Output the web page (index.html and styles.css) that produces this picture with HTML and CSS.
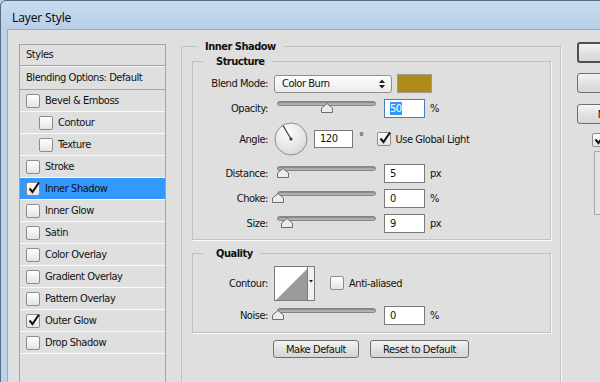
FILE: index.html
```html
<!DOCTYPE html>
<html lang="en">
<head>
    <meta charset="UTF-8">
    <title>Layer Style</title>
    <link rel="stylesheet" href="styles.css">
</head>
<body>

<div class="window">
    <div class="titlebar">Layer Style</div>

    <div class="client">
        <!-- 左侧样式列表 -->
        <div class="sidebar">
            <div class="side-head">Styles</div>
            <div class="side-blend">Blending Options: Default</div>
            <div class="side-item"><span class="cb"></span>Bevel &amp; Emboss</div>
            <div class="side-item sub"><span class="cb"></span>Contour</div>
            <div class="side-item sub"><span class="cb"></span>Texture</div>
            <div class="side-item"><span class="cb"></span>Stroke</div>
            <div class="side-item active"><span class="cb checked"><svg viewBox="0 0 12 12"><path d="M1.5 6.5 L4.5 10 L11 0.5"/></svg></span>Inner Shadow</div>
            <div class="side-item"><span class="cb"></span>Inner Glow</div>
            <div class="side-item"><span class="cb"></span>Satin</div>
            <div class="side-item"><span class="cb"></span>Color Overlay</div>
            <div class="side-item"><span class="cb"></span>Gradient Overlay</div>
            <div class="side-item"><span class="cb"></span>Pattern Overlay</div>
            <div class="side-item"><span class="cb checked"><svg viewBox="0 0 12 12"><path d="M1.5 6.5 L4.5 10 L11 0.5"/></svg></span>Outer Glow</div>
            <div class="side-item"><span class="cb"></span>Drop Shadow</div>
        </div>

        <!-- 中间设置区 -->
        <div class="main">
            <fieldset class="outer">
                <legend>Inner Shadow</legend>

                <fieldset class="group">
                    <legend>Structure</legend>

                    <div class="row">
                        <span class="lbl">Blend Mode:</span>
                        <div class="select">Color Burn
                            <svg class="updown" viewBox="0 0 6 10"><path d="M0 4 L3 0.5 L6 4 Z M0 6 L3 9.5 L6 6 Z"/></svg>
                        </div>
                        <div class="swatch"></div>
                    </div>

                    <div class="row">
                        <span class="lbl">Opacity:</span>
                        <div class="slider"><div class="track"></div>
                            <svg class="thumb" style="left:44px" viewBox="0 0 12 10"><polygon points="0.5,9.5 0.5,5 6,0.5 11.5,5 11.5,9.5"/></svg>
                        </div>
                        <div class="num focus"><span class="sel">50</span></div>
                        <span class="unit">%</span>
                    </div>

                    <div class="row angle">
                        <span class="lbl">Angle:</span>
                        <svg class="dial" viewBox="0 0 34 34">
                            <defs>
                                <radialGradient id="dialFill" cx="0.4" cy="0.3" r="0.8">
                                    <stop offset="0" stop-color="#ffffff"/>
                                    <stop offset="1" stop-color="#d4d4d4"/>
                                </radialGradient>
                            </defs>
                            <circle cx="17" cy="17" r="16" fill="url(#dialFill)" stroke="#8c8c8c"/>
                            <line x1="17" y1="17" x2="9" y2="3.5" stroke="#3a3a3a" stroke-width="1.2"/>
                            <circle cx="17" cy="17" r="1.6" fill="#3a3a3a"/>
                        </svg>
                        <div class="num small">120</div>
                        <span class="deg">°</span>
                        <span class="cb checked gl"><svg viewBox="0 0 12 12"><path d="M1.5 6.5 L4.5 10 L11 0.5"/></svg></span>
                        <span class="cb-text">Use Global Light</span>
                    </div>

                    <div class="row">
                        <span class="lbl">Distance:</span>
                        <div class="slider"><div class="track"></div>
                            <svg class="thumb" style="left:0px" viewBox="0 0 12 10"><polygon points="0.5,9.5 0.5,5 6,0.5 11.5,5 11.5,9.5"/></svg>
                        </div>
                        <div class="num">5</div>
                        <span class="unit">px</span>
                    </div>

                    <div class="row">
                        <span class="lbl">Choke:</span>
                        <div class="slider"><div class="track"></div>
                            <svg class="thumb" style="left:-5px" viewBox="0 0 12 10"><polygon points="0.5,9.5 0.5,5 6,0.5 11.5,5 11.5,9.5"/></svg>
                        </div>
                        <div class="num">0</div>
                        <span class="unit">%</span>
                    </div>

                    <div class="row">
                        <span class="lbl">Size:</span>
                        <div class="slider"><div class="track"></div>
                            <svg class="thumb" style="left:4px" viewBox="0 0 12 10"><polygon points="0.5,9.5 0.5,5 6,0.5 11.5,5 11.5,9.5"/></svg>
                        </div>
                        <div class="num">9</div>
                        <span class="unit">px</span>
                    </div>
                </fieldset>

                <fieldset class="group quality">
                    <legend>Quality</legend>

                    <div class="row contour-row">
                        <span class="lbl">Contour:</span>
                        <svg class="contour" viewBox="0 0 41 35">
                            <rect x="0.5" y="0.5" width="33" height="34" fill="#ffffff" stroke="#7c7c7c"/>
                            <polygon points="2,34 33,3 33,34" fill="#9b9b9b"/>
                            <rect x="33.5" y="0.5" width="7" height="34" fill="#f1f1f1" stroke="#7c7c7c"/>
                            <polygon points="35,14 39,14 37,16.5" fill="#1a1a1a"/>
                        </svg>
                        <span class="cb aa"></span>
                        <span class="cb-text">Anti-aliased</span>
                    </div>

                    <div class="row">
                        <span class="lbl">Noise:</span>
                        <div class="slider"><div class="track"></div>
                            <svg class="thumb" style="left:-5px" viewBox="0 0 12 10"><polygon points="0.5,9.5 0.5,5 6,0.5 11.5,5 11.5,9.5"/></svg>
                        </div>
                        <div class="num">0</div>
                        <span class="unit">%</span>
                    </div>
                </fieldset>

                <div class="defaults">
                    <button type="button" class="btn make">Make Default</button>
                    <button type="button" class="btn reset">Reset to Default</button>
                </div>
            </fieldset>
        </div>

        <!-- 右侧按钮 -->
        <div class="actions">
            <button type="button" class="btn side default">OK</button>
            <button type="button" class="btn side">Cancel</button>
            <button type="button" class="btn side">New Style...</button>
            <div class="preview-row">
                <span class="cb checked"><svg viewBox="0 0 12 12"><path d="M1.5 6.5 L4.5 10 L11 0.5"/></svg></span>
                <span class="cb-text">Preview</span>
            </div>
            <div class="preview"></div>
        </div>
    </div>
</div>

</body>
</html>
```

FILE: styles.css
```css
html, body {
    margin: 0;
    height: 100%;
    overflow: hidden;
}
body {
    background: #bcd2ea;
    font-family: "DejaVu Sans Condensed", "DejaVu Sans", sans-serif;
    font-stretch: condensed;
    font-size: 11px;
    letter-spacing: -0.45px;
    color: #111;
}
.window {
    width: 720px;
    height: 420px;
    border: 1px solid #5a6b7e;
    border-radius: 6px 6px 0 0;
    background: linear-gradient(#c8dcf1, #b8cfe8 29px, #bcd2ea 29px);
}
.titlebar {
    height: 24px;
    padding: 4px 0 0 11px;
    display: flex;
    align-items: center;
    font-family: "Open Sans", "Noto Sans", sans-serif;
    font-stretch: normal;
    font-size: 12px;
    letter-spacing: -0.1px;
    color: #000;
}
.client {
    margin-left: 6px;
    height: 400px;
    border-top: 1px solid #97abc2;
    border-left: 1px solid #97abc2;
    background: #dfdfdf;
    display: flex;
    align-items: flex-start;
}

/* sidebar */
.sidebar {
    margin: 14px 0 0 11px;
    width: 145px;
    height: 360px;
    border: 1px solid #a4a4a4;
}
.side-head {
    height: 20px;
    line-height: 20px;
    padding-left: 6px;
    border-bottom: 1px solid #a4a4a4;
}
.side-blend {
    height: 22px;
    line-height: 22px;
    padding-left: 6px;
    border-top: 1px solid #f4f4f4;
    border-bottom: 1px solid #a4a4a4;
}
.side-item {
    height: 21px;
    display: flex;
    align-items: center;
    padding-left: 6px;
    border-bottom: 1px solid #fbfbfb;
}
.side-item.sub {
    padding-left: 19px;
}
.side-item.active {
    background: #3399ff;
}
.side-item .cb {
    margin-right: 5px;
}
.cb {
    flex: none;
    display: inline-block;
    width: 12px;
    height: 12px;
    border: 1px solid #8b8c8c;
    border-radius: 2px;
    background: linear-gradient(#ffffff, #e4e4e4);
    position: relative;
}
.cb svg {
    position: absolute;
    left: 1px;
    top: -1px;
    width: 12px;
    height: 12px;
}
.cb svg path {
    fill: none;
    stroke: #111;
    stroke-width: 2;
}

/* main area */
.main {
    margin: 10px 0 0 15px;
}
fieldset {
    margin: 0;
    padding: 0;
    border: 1px solid #c1c1c1;
    box-shadow: 1px 1px 0 #fafafa;
}
legend {
    font-weight: bold;
    line-height: 13px;
    letter-spacing: -0.5px;
}
.outer {
    width: 378px;
    height: 360px;
}
.outer > legend {
    margin-left: 15px;
    padding: 0 8px;
}
.group {
    margin: 2px 9px 0 10px;
    padding: 3px 0 3px;
}
.group > legend {
    margin-left: 10px;
    padding: 0 7px 0 13px;
}
.quality {
    margin-top: 7px;
    padding: 3px 0 4px;
}
.row {
    display: flex;
    align-items: center;
    height: 25px;
}
.row.angle {
    height: 36px;
    margin-bottom: 4px;
}
.row.contour-row {
    height: 40px;
}
.lbl {
    flex: none;
    width: 75px;
    text-align: right;
}
.select {
    margin-left: 6px;
    width: 118px;
    height: 18px;
    box-sizing: border-box;
    border: 1px solid #8e8e8e;
    border-radius: 3px;
    background: linear-gradient(#fdfdfd, #ececec);
    display: flex;
    align-items: center;
    padding-left: 7px;
    position: relative;
}
.updown {
    position: absolute;
    right: 6px;
    top: 3px;
    width: 6px;
    height: 10px;
    fill: #222;
}
.swatch {
    margin-left: 5px;
    width: 35px;
    height: 19px;
    box-sizing: border-box;
    border: 1px solid #9a9a9a;
    background: #ad8b16;
}
.slider {
    flex: none;
    position: relative;
    width: 99px;
    height: 12px;
    margin-left: 9px;
    margin-top: -3px;
}
.track {
    height: 3px;
    border: 1px solid #858585;
    border-radius: 3px;
    background: #b2b2b2;
    box-shadow: inset 0 1px 1px #858585;
}
.thumb {
    position: absolute;
    top: 2px;
    width: 12px;
    height: 10px;
}
.thumb polygon {
    fill: #ececec;
    stroke: #6c6c6c;
}
.num {
    flex: none;
    margin-left: 8px;
    width: 41px;
    height: 19px;
    box-sizing: border-box;
    border: 1px solid #7a7a7a;
    background: #fff;
    padding-left: 5px;
    line-height: 17px;
}
.num.focus {
    border-color: #4a7fb5;
}
.num.small {
    margin-left: 6px;
    width: 39px;
    height: 18px;
    line-height: 16px;
}
.sel {
    background: #3399ff;
    color: #fff;
}
.unit {
    margin-left: 5px;
}
.dial {
    flex: none;
    margin-left: 6px;
    width: 34px;
    height: 34px;
}
.deg {
    margin-left: 6px;
    margin-top: -6px;
}
.cb.gl {
    margin-left: 13px;
}
.cb-text {
    margin-left: 5px;
}
.contour {
    flex: none;
    margin-left: 6px;
    width: 41px;
    height: 35px;
}
.cb.aa {
    margin-left: 15px;
}

/* buttons */
.btn {
    font-family: inherit;
    font-stretch: condensed;
    font-size: 11px;
    letter-spacing: -0.45px;
    color: #111;
    height: 18px;
    padding: 0;
    border: 1px solid #707070;
    border-radius: 3px;
    background: linear-gradient(#f4f4f4, #e2e2e2 50%, #d6d6d6);
}
.defaults {
    display: flex;
    gap: 11px;
    padding-left: 91px;
    margin-top: 7px;
}
.btn.make {
    width: 86px;
}
.btn.reset {
    width: 99px;
}
.actions {
    margin: 12px 0 0 16px;
    width: 95px;
    display: flex;
    flex-direction: column;
}
.btn.side {
    width: 95px;
    height: 20px;
    margin-bottom: 11px;
}
.btn.default {
    height: 21px;
    border: 2px solid #4f4f4f;
    margin-bottom: 10px;
}
.preview-row {
    display: flex;
    align-items: center;
    margin: -2px 0 0 15px;
}
.preview {
    margin: 4px 0 0 17px;
    width: 60px;
    height: 62px;
    border: 1px solid #a8a8a8;
    background: #e3e3e3;
}
```
